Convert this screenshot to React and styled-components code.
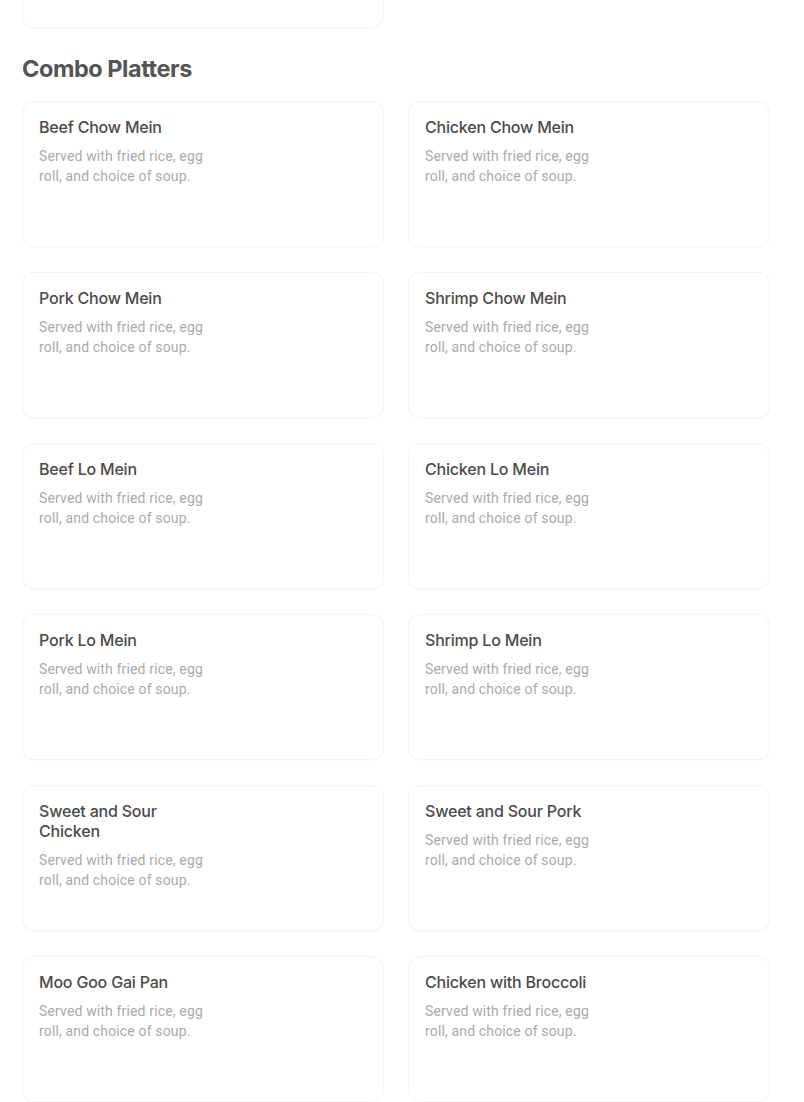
import React from "react";
import styled, { createGlobalStyle } from "styled-components";

const GlobalStyle = createGlobalStyle`
  html, body {
    margin: 0;
    padding: 0;
    background: #ffffff;
  }
  body {
    font-family: Inter, "Liberation Sans", sans-serif;
  }
`;

const Page = styled.div`
  padding: 0 34px 0 22px;
`;

const Grid = styled.div`
  display: grid;
  grid-template-columns: 1fr 1fr;
  column-gap: 24px;
  row-gap: 25px;
`;

const Card = styled.div`
  box-sizing: border-box;
  height: 146px;
  padding: 15px 16px;
  border: 1px solid #f4f4f4;
  border-radius: 12px;
  background: #fff;
  box-shadow: 0 1px 2px rgba(0, 0, 0, 0.02);
  margin-top: ${(p) => (p.$cut ? "-118px" : "0")};
`;

const TextCol = styled.div`
  max-width: 172px;
`;

const Title = styled.div`
  font-family: Inter, "Liberation Sans", sans-serif;
  font-size: 16px;
  font-weight: 500;
  line-height: 20px;
  letter-spacing: -0.2px;
  color: #4b4b4b;
`;

const Desc = styled.div`
  margin-top: 9px;
  font-family: Roboto, "Liberation Sans", sans-serif;
  font-size: 14px;
  font-weight: 400;
  line-height: 20px;
  letter-spacing: 0.15px;
  color: #aaaaaa;
`;

const Heading = styled.h2`
  margin: 25px 0 16px;
  font-family: Inter, "Liberation Sans", sans-serif;
  font-size: 23.5px;
  font-weight: 700;
  line-height: 32px;
  letter-spacing: -0.45px;
  color: #555555;
`;

const items = [
  "Beef Chow Mein",
  "Chicken Chow Mein",
  "Pork Chow Mein",
  "Shrimp Chow Mein",
  "Beef Lo Mein",
  "Chicken Lo Mein",
  "Pork Lo Mein",
  "Shrimp Lo Mein",
  "Sweet and Sour Chicken",
  "Sweet and Sour Pork",
  "Moo Goo Gai Pan",
  "Chicken with Broccoli",
];

const MenuCard = ({ name }) => (
  <Card>
    <TextCol>
      <Title>{name}</Title>
      <Desc>Served with fried rice, egg roll, and choice of soup.</Desc>
    </TextCol>
  </Card>
);

export default function App() {
  return (
    <Page>
      <GlobalStyle />
      <Grid>
        <Card $cut />
      </Grid>
      <Heading>Combo Platters</Heading>
      <Grid>
        {items.map((name) => (
          <MenuCard key={name} name={name} />
        ))}
      </Grid>
    </Page>
  );
}
